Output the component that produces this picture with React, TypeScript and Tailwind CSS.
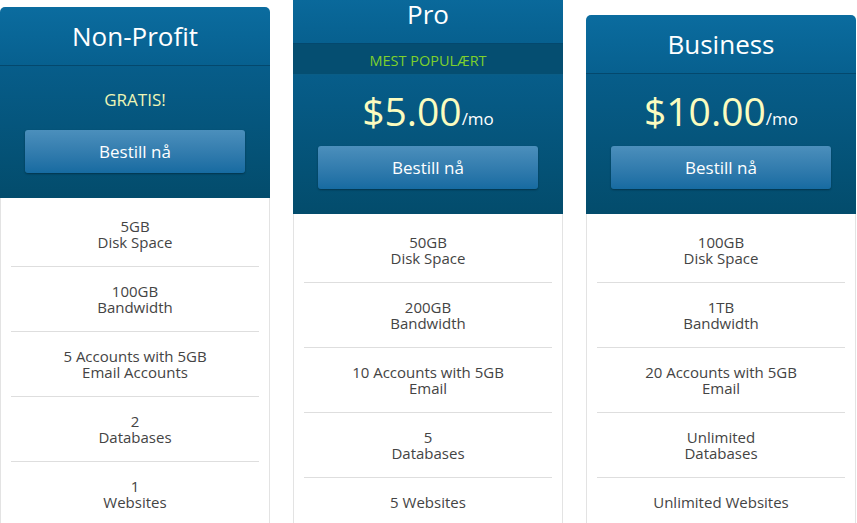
import React from 'react';

type Plan = {
  name: string;
  badge?: string;
  price?: string;
  free?: string;
  offset: string;
  features: string[][];
};

const plans: Plan[] = [
  {
    name: 'Non-Profit',
    free: 'GRATIS!',
    offset: 'mt-[7px]',
    features: [
      ['5GB', 'Disk Space'],
      ['100GB', 'Bandwidth'],
      ['5 Accounts with 5GB', 'Email Accounts'],
      ['2', 'Databases'],
      ['1', 'Websites'],
    ],
  },
  {
    name: 'Pro',
    badge: 'Mest populært',
    price: '$5.00',
    offset: '-mt-[15px]',
    features: [
      ['50GB', 'Disk Space'],
      ['200GB', 'Bandwidth'],
      ['10 Accounts with 5GB', 'Email'],
      ['5', 'Databases'],
      ['5 Websites'],
    ],
  },
  {
    name: 'Business',
    price: '$10.00',
    offset: 'mt-[15px]',
    features: [
      ['100GB', 'Disk Space'],
      ['1TB', 'Bandwidth'],
      ['20 Accounts with 5GB', 'Email'],
      ['Unlimited', 'Databases'],
      ['Unlimited Websites'],
    ],
  },
];

const PlanCard = ({ plan }: { plan: Plan }) => {
  return (
    <div className={`w-[270px] shrink-0 ${plan.offset}`}>
      {/* header */}
      <div className="rounded-t-[5px] overflow-hidden">
        <div className="h-[59px] flex items-center justify-center text-[26px] text-white bg-gradient-to-b from-[#0b6c9f] to-[#07608f] border-b border-[#04486d]">
          {plan.name}
        </div>
        {plan.badge && (
          <div className="h-[31px] flex items-center justify-center pt-[3px] text-[14.5px] uppercase text-[#7fd12c] bg-[#054e71] border-b border-[#0a5d86]">
            {plan.badge}
          </div>
        )}
        <div
          className={`px-[25px] pb-[25px] bg-gradient-to-b from-[#075d8a] to-[#034c6c] ${
            plan.badge ? 'pt-[13px]' : 'pt-[14px]'
          }`}
        >
          {plan.free ? (
            <div className="h-[40px] flex items-center justify-center text-[17px] text-[#eef5b5]">{plan.free}</div>
          ) : (
            <div className="h-[48px] flex items-end justify-center pb-[6px]">
              <span className="text-[39px] leading-none text-[#fbfcbf]">{plan.price}</span>
              <span className="text-[17px] leading-none text-white mb-[3px]">/mo</span>
            </div>
          )}
          <button className="mt-[10px] w-full h-[43px] rounded-[3px] text-[17px] text-white bg-gradient-to-b from-[#4b8fbc] to-[#166ba1] shadow-[0_1px_2px_rgba(0,0,0,0.35)]">
            Bestill nå
          </button>
        </div>
      </div>

      {/* features */}
      <div className="bg-white border-x border-[#e3e3e3] pt-[4px] h-[400px]">
        {plan.features.map((f, i) => (
          <div
            key={i}
            className={`mx-[10px] py-[16px] text-center text-[15px] leading-[16px] text-[#444] ${
              i < plan.features.length - 1 ? 'border-b border-[#dedede]' : ''
            }`}
          >
            {f.map((line) => (
              <div key={line}>{line}</div>
            ))}
          </div>
        ))}
      </div>
    </div>
  );
};

export default function App() {
  return (
    <div
      className="w-[857px] h-[523px] overflow-hidden bg-white"
      style={{ fontFamily: '"Open Sans", "DejaVu Sans", sans-serif' }}
    >
      <div className="flex items-start gap-[23px]">
        {plans.map((p) => (
          <PlanCard key={p.name} plan={p} />
        ))}
      </div>
    </div>
  );
}
